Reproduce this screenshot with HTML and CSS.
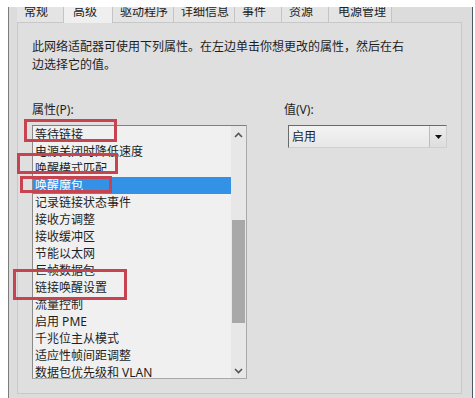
FILE: index.html
```html
<!DOCTYPE html>
<html lang="zh-CN">
<head>
<meta charset="utf-8">
<title>高级</title>
<link rel="stylesheet" href="styles.css">
</head>
<body>
<div class="window">
  <div class="tabs">
    <div class="tab">常规</div>
    <div class="tab tab-active">高级</div>
    <div class="tab">驱动程序</div>
    <div class="tab">详细信息</div>
    <div class="tab">事件</div>
    <div class="tab">资源</div>
    <div class="tab tab-last">电源管理</div>
  </div>
  <div class="panel">
    <p class="desc">此网络适配器可使用下列属性。在左边单击你想更改的属性，然后在右<br>边选择它的值。</p>
    <div class="fields">
      <div class="col-left">
        <div class="label">属性(P):</div>
        <div class="listbox">
          <div class="items">
            <div class="item">等待链接</div>
            <div class="item">电源关闭时降低速度</div>
            <div class="item">唤醒模式匹配</div>
            <div class="item item-selected">唤醒魔包</div>
            <div class="item">记录链接状态事件</div>
            <div class="item">接收方调整</div>
            <div class="item">接收缓冲区</div>
            <div class="item">节能以太网</div>
            <div class="item">巨帧数据包</div>
            <div class="item">链接唤醒设置</div>
            <div class="item">流量控制</div>
            <div class="item">启用 PME</div>
            <div class="item">千兆位主从模式</div>
            <div class="item">适应性帧间距调整</div>
            <div class="item">数据包优先级和 VLAN</div>
          </div>
          <div class="scrollbar">
            <div class="sb-btn sb-up">
              <svg width="9" height="6" viewBox="0 0 9 6"><polyline points="1,5 4.5,1.5 8,5" fill="none" stroke="#555" stroke-width="1.6"/></svg>
            </div>
            <div class="sb-gap"></div>
            <div class="sb-thumb"></div>
            <div class="sb-rest"></div>
            <div class="sb-btn sb-down">
              <svg width="9" height="6" viewBox="0 0 9 6"><polyline points="1,1 4.5,4.5 8,1" fill="none" stroke="#555" stroke-width="1.6"/></svg>
            </div>
          </div>
        </div>
      </div>
      <div class="col-right">
        <div class="label">值(V):</div>
        <div class="combo">
          <div class="combo-text">启用</div>
          <div class="combo-btn">
            <svg width="7" height="4" viewBox="0 0 7 4"><polygon points="0,0 7,0 3.5,4" fill="#111"/></svg>
          </div>
        </div>
      </div>
    </div>
  </div>
</div>
<div class="mark mark-1"></div>
<div class="mark mark-2"></div>
<div class="mark mark-3"></div>
<div class="mark mark-4"></div>
</body>
</html>
```

FILE: styles.css
```css
* { box-sizing: border-box; }
html, body { margin: 0; padding: 0; background: #ffffff; }
body {
  position: relative;
  width: 475px;
  height: 398px;
  overflow: hidden;
  font-family: "Noto Sans", "Noto Sans CJK SC", sans-serif;
  font-size: 12px;
  color: #1e1e1e;
}
.window {
  margin: 7px 0 0 8px;
  width: 465px;
  height: 391px;
  background: #dcdcdc;
  border-left: 1px solid #7c7c7c;
  border-right: 1px solid #4a5868;
  padding-left: 8px;
  overflow: hidden;
}
.tabs {
  display: flex;
  height: 15px;
}
.tab {
  min-width: 47px;
  padding: 0 5px 0 7px;
  height: 15px;
  line-height: 9px;
  background: #e4e4e4;
  border-right: 1px solid #c4c4c4;
  color: #222;
  white-space: nowrap;
}
.tab-active {
  background: #efefef;
  min-width: 49px;
  padding-left: 9px;
  height: 16px;
  position: relative;
  z-index: 1;
}
.tab-last {
  padding-left: 9px;
  min-width: 62px;
}
.panel {
  width: 445px;
  height: 372px;
  border: 1px solid #c8c8c8;
  background: #e0dfe0;
  padding: 15px 0 0 14px;
}
.desc {
  margin: 0;
  line-height: 18px;
}
.fields {
  display: flex;
  margin-top: 27px;
}
.col-left { width: 215px; }
.col-right { margin-left: 37px; }
.label { line-height: 18px; }
.listbox {
  margin-top: 6px;
  width: 215px;
  height: 254px;
  border: 1px solid #a9a9a9;
  border-top-color: #7f7f7f;
  border-left-color: #8a8a8a;
  background: #f0f0f0;
  display: flex;
  overflow: hidden;
}
.items { width: 198px; }
.item {
  height: 17px;
  line-height: 17px;
  padding-left: 2px;
  white-space: nowrap;
}
.item-selected {
  background: #3391e6;
  color: #ffffff;
}
.scrollbar {
  width: 15px;
  height: 252px;
  background: #e7e7e7;
  display: flex;
  flex-direction: column;
}
.sb-btn {
  display: flex;
  align-items: center;
  justify-content: center;
}
.sb-up { height: 17px; }
.sb-gap { height: 77px; }
.sb-thumb { height: 103px; background: #a8a8a8; margin: 0 1px; }
.sb-rest { flex: 1; }
.sb-down { height: 16px; padding-top: 2px; }
.combo {
  margin: 6px 0 0 4px;
  width: 159px;
  height: 23px;
  border: 1px solid #cfcfcf;
  border-top-color: #6a6a6a;
  border-left-color: #6a6a6a;
  background: linear-gradient(#f3f3f3, #e7e7e7);
  display: flex;
}
.combo-text {
  flex: 1;
  padding-left: 3px;
  line-height: 21px;
}
.combo-btn {
  width: 17px;
  height: 21px;
  border-left: 1px solid #bdbdbd;
  background: linear-gradient(#ececec, #dedede);
  display: flex;
  align-items: center;
  justify-content: center;
}
.mark {
  position: absolute;
  border: 3px solid #c6434f;
}
.mark-1 { left: 24px; top: 119px; width: 93px; height: 23px; }
.mark-2 { left: 17px; top: 153px; width: 101px; height: 21px; }
.mark-3 { left: 20px; top: 176px; width: 92px; height: 17px; }
.mark-4 { left: 13px; top: 269px; width: 114px; height: 31px; }
```
